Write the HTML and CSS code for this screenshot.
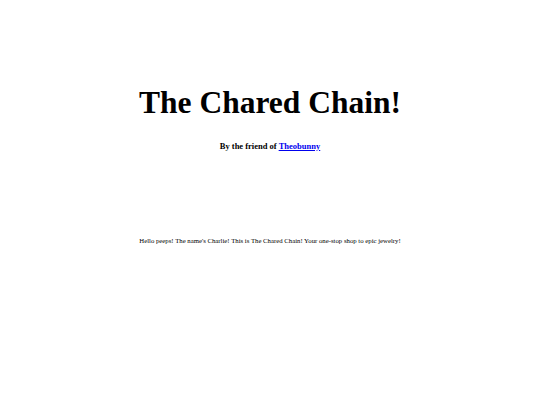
FILE: index.html
```html
<!DOCTYPE html>
<html>
<head>
<meta charset="utf-8">
<link rel="stylesheet" href="styles.css">
</head>
<body>
<div class="page">
  <h1 class="title">The Chared Chain!</h1>
  <h3 class="byline">By the friend of <a href="#" class="link">Theobunny</a></h3>
  <p class="intro">Hello peeps! The name's Charlie! This is The Chared Chain! Your one-stop shop to epic jewelry!</p>
</div>
</body>
</html>
```
FILE: styles.css
```css
html, body {
  margin: 0;
  padding: 0;
  background: #fff;
}
.page {
  font-family: "Liberation Serif", "Times New Roman", serif;
  color: #000;
  text-align: center;
  padding-top: 85px;
}
.title {
  font-size: 31.5px;
  font-weight: bold;
  margin: 0;
  line-height: 36px;
}
.byline {
  font-size: 8.5px;
  font-weight: bold;
  margin: 19px 0 0;
  line-height: 12px;
}
.link {
  color: #0000ee;
  text-decoration: underline;
}
.intro {
  font-size: 6.75px;
  margin: 84px 0 0;
  line-height: 9px;
}
```
